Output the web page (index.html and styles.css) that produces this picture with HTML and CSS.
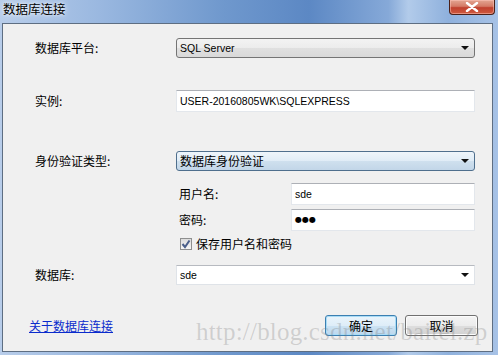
FILE: index.html
```html
<!DOCTYPE html>
<html lang="zh-CN">
<head>
<meta charset="utf-8">
<title>数据库连接</title>
<link rel="stylesheet" href="styles.css">
</head>
<body>
<div class="window">
  <div class="titlebar">
    <span class="title">数据库连接</span>
    <div class="close">
      <svg width="14" height="10" viewBox="0 0 14 10"><path d="M2 1 L12 9 M12 1 L2 9" stroke="#fff" stroke-width="2.4" stroke-linecap="round"/></svg>
    </div>
  </div>
  <div class="client">
    <div class="form">
      <div class="row r1">
        <span class="lbl">数据库平台:</span>
        <div class="combo gray"><span class="val latin">SQL Server</span><i class="arrow"></i></div>
      </div>
      <div class="row r2">
        <span class="lbl">实例:</span>
        <div class="textbox"><span class="val latin">USER-20160805WK\SQLEXPRESS</span></div>
      </div>
      <div class="row r3">
        <span class="lbl">身份验证类型:</span>
        <div class="combo blue"><span class="val">数据库身份验证</span><i class="arrow"></i></div>
      </div>
      <div class="sub">
        <div class="subrow s1">
          <span class="sublbl">用户名:</span>
          <div class="textbox"><span class="val latin">sde</span></div>
        </div>
        <div class="subrow s2">
          <span class="sublbl">密码:</span>
          <div class="textbox"><span class="val dots">●●●</span></div>
        </div>
        <div class="check">
          <span class="box"><svg width="10" height="10" viewBox="0 0 10 10"><path d="M1.5 5 L4 8 L8.5 1.5" fill="none" stroke="#4a5f8a" stroke-width="2"/></svg></span>
          <span class="checklbl">保存用户名和密码</span>
        </div>
      </div>
      <div class="row r4">
        <span class="lbl">数据库:</span>
        <div class="combo white"><span class="val latin">sde</span><i class="arrow"></i></div>
      </div>
    </div>
    <div class="footer">
      <a class="link" href="#">关于数据库连接</a>
      <div class="buttons">
        <button class="btn ok">确定</button>
        <button class="btn cancel">取消</button>
      </div>
    </div>
    <div class="watermark">http://blog.csdn.net/baitel.zp</div>
  </div>
</div>
</body>
</html>
```
FILE: styles.css
```css
* { box-sizing: border-box; }
html, body { margin: 0; padding: 0; }
body {
  width: 498px;
  height: 355px;
  overflow: hidden;
  font-family: "Noto Sans CJK SC", "Noto Sans", sans-serif;
  font-size: 12px;
  color: #000;
}
.window {
  width: 498px;
  height: 355px;
  display: flex;
  flex-direction: column;
  background: linear-gradient(to right, #b8cdea 0%, #9ab8e0 20%, #6f98cd 45%, #5c88c4 62%, #86a9d8 78%, #b2cbea 82%, #8fb1dd 90%, #a7c2e6 100%);
}
.titlebar {
  height: 23px;
  display: flex;
  align-items: flex-start;
  padding-left: 3px;
  flex: none;
}
.title {
  line-height: 16px;
  padding-top: 1px;
  font-size: 12.5px;
  text-shadow: 0 0 6px rgba(255,255,255,0.9), 0 0 3px rgba(255,255,255,0.8);
}
.close {
  margin-left: auto;
  margin-right: 3px;
  width: 46px;
  height: 15px;
  border: 1px solid #4a2018;
  border-top: none;
  border-radius: 0 0 4px 4px;
  background: linear-gradient(#e3a592 0%, #d47a66 45%, #c0402e 55%, #cf5a3e 100%);
  display: flex;
  align-items: center;
  justify-content: center;
  box-shadow: inset 0 0 0 1px rgba(255,200,190,0.5);
}
.client {
  position: relative;
  flex: none;
  height: 329px;
  margin: 0 5px 3px 2px;
  border: 1px solid #5e6e82;
  background: #f0f0f0;
  display: flex;
  flex-direction: column;
}
.form {
  padding: 14px 17px 0 32px;
  display: flex;
  flex-direction: column;
}
.row {
  display: flex;
  align-items: center;
}
.lbl {
  width: 141px;
  flex: none;
  line-height: 14px;
}
.r1 { height: 20px; }
.r2 { height: 22px; margin-top: 32px; }
.r3 { height: 20px; margin-top: 39px; }
.r4 { height: 20px; margin-top: 15px; }
.combo, .textbox {
  flex: 1;
  height: 100%;
  display: flex;
  align-items: center;
  position: relative;
}
.val {
  padding-left: 3px;
  line-height: 14px;
  white-space: nowrap;
}
.latin {
  font-family: "Liberation Sans", Arial, sans-serif;
  font-size: 10.5px;
}
.dots {
  font-family: "DejaVu Sans", sans-serif;
  font-size: 8px;
  letter-spacing: 0;
}
.combo.gray {
  border: 1px solid #747474;
  border-radius: 3px;
  background: linear-gradient(#f3f3f3 0%, #ececec 50%, #e0e0e0 51%, #d9d9d9 100%);
}
.combo.blue {
  border: 1px solid #4f6f8d;
  border-radius: 3px;
  background: linear-gradient(#eef5fb 0%, #e0ecf6 50%, #cfe0ee 51%, #c2d6e8 100%);
}
.combo.white {
  border: 1px solid #dfe3e8;
  border-top-color: #b7bac0;
  background: #fff;
}
.textbox {
  border: 1px solid #e3e7ec;
  border-top-color: #adb0b6;
  background: #fff;
}
.arrow {
  position: absolute;
  right: 5px;
  top: 50%;
  margin-top: -2px;
  width: 0;
  height: 0;
  border-left: 4px solid transparent;
  border-right: 4px solid transparent;
  border-top: 4px solid #111;
}
.sub {
  margin-left: 144px;
  margin-top: 12px;
  display: flex;
  flex-direction: column;
}
.subrow {
  height: 22px;
  display: flex;
  align-items: center;
}
.s2 { margin-top: 4px; }
.sublbl {
  width: 112px;
  flex: none;
  line-height: 14px;
}
.check {
  margin-top: 6px;
  height: 13px;
  display: flex;
  align-items: center;
  gap: 4px;
  margin-left: 1px;
}
.box {
  width: 12px;
  height: 12px;
  border: 1px solid #8e8f8f;
  background: linear-gradient(#dcdcdc, #f6f6f6);
  display: flex;
  align-items: center;
  justify-content: center;
  flex: none;
}
.checklbl { line-height: 14px; }
.footer {
  margin-top: auto;
  padding: 0 14px 15px 26px;
  display: flex;
  align-items: center;
}
.link {
  color: #0a2bcc;
  text-decoration: underline;
  line-height: 14px;
  margin-top: 1px;
}
.buttons {
  margin-left: auto;
  display: flex;
  gap: 8px;
}
.btn {
  font-family: "Noto Sans CJK SC", sans-serif;
  font-size: 12px;
  color: #000;
  height: 21px;
  padding: 0;
  line-height: 14px;
  border-radius: 3px;
}
.btn.ok {
  width: 72px;
  border: 1px solid #3c7fb1;
  background: linear-gradient(#eaf4fb 0%, #deedf8 50%, #cde3f3 51%, #bcd8ee 100%);
  box-shadow: inset 0 0 0 1px #a9dcf6;
}
.btn.cancel {
  width: 73px;
  border: 1px solid #707070;
  background: linear-gradient(#f4f4f4 0%, #ececec 50%, #dedede 51%, #d2d2d2 100%);
  box-shadow: inset 0 0 0 1px #fcfcfc;
}
.watermark {
  position: absolute;
  left: 193px;
  top: 293px;
  font-family: "Liberation Serif", serif;
  font-size: 25px;
  line-height: 30px;
  color: rgba(120,120,120,0.28);
  white-space: nowrap;
  pointer-events: none;
  letter-spacing: 0.2px;
}
```
